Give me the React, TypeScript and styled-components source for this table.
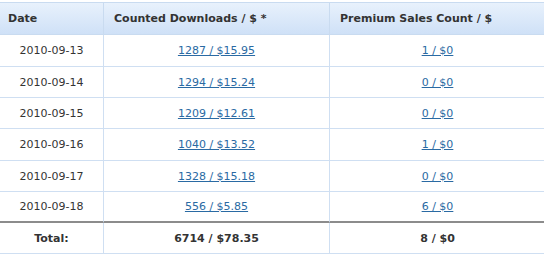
import * as React from 'react';
import styled, { createGlobalStyle } from 'styled-components';

const GlobalStyle = createGlobalStyle`
    html, body {
        margin: 0;
        padding: 0;
        background: #ffffff;
    }
    body {
        font-family: "DejaVu Sans", Verdana, sans-serif;
        font-size: 11px;
        color: #333333;
    }
`;

const Table = styled.table`
    margin-top: 2px;
    width: 545px;
    border-collapse: separate;
    border-spacing: 0;
    table-layout: fixed;
`;

const HeadCell = styled.th<{ $width?: number; $pad: number }>`
    width: ${(p) => (p.$width ? `${p.$width}px` : 'auto')};
    height: 33px;
    padding: 0 0 0 ${(p) => p.$pad}px;
    box-sizing: border-box;
    text-align: left;
    font-weight: bold;
    font-size: 11px;
    color: #333333;
    background: linear-gradient(to bottom, #e8f1fc 0%, #cfe1f7 100%);
    border-top: 1px solid #c9dbf0;
    border-bottom: 1px solid #c9dbf0;
    border-right: 1px solid #c9dbf0;
    &:last-child {
        border-right: none;
    }
`;

const Cell = styled.td<{ $height: number; $last?: boolean }>`
    height: ${(p) => p.$height}px;
    padding: 0;
    text-align: center;
    vertical-align: middle;
    border-bottom: ${(p) => (p.$last ? '2px solid #8c8c8c' : '1px solid #cfdff2')};
    border-right: 1px solid #cfdff2;
    &:last-child {
        border-right: none;
    }
`;

const TotalCell = styled.td`
    height: 30px;
    padding: 0;
    text-align: center;
    vertical-align: middle;
    font-weight: bold;
    border-bottom: 1px solid #cfdff2;
    border-right: 1px solid #cfdff2;
    &:last-child {
        border-right: none;
    }
`;

const StatLink = styled.a`
    color: #2a6aa3;
    text-decoration: underline;
    cursor: pointer;
`;

const rows = [
    { date: '2010-09-13', downloads: '1287 / $15.95', premium: '1 / $0', h: 31 },
    { date: '2010-09-14', downloads: '1294 / $15.24', premium: '0 / $0', h: 30 },
    { date: '2010-09-15', downloads: '1209 / $12.61', premium: '0 / $0', h: 30 },
    { date: '2010-09-16', downloads: '1040 / $13.52', premium: '1 / $0', h: 31 },
    { date: '2010-09-17', downloads: '1328 / $15.18', premium: '0 / $0', h: 30 },
    { date: '2010-09-18', downloads: '556 / $5.85', premium: '6 / $0', h: 29 },
];

function App() {
    return (
        <>
            <GlobalStyle />
            <Table>
                <thead>
                    <tr>
                        <HeadCell $width={104} $pad={8}>Date</HeadCell>
                        <HeadCell $width={226} $pad={10}>Counted Downloads / $ *</HeadCell>
                        <HeadCell $pad={10}>Premium Sales Count / $</HeadCell>
                    </tr>
                </thead>
                <tbody>
                    {rows.map((row, i) => {
                        const last = i === rows.length - 1;
                        return (
                            <tr key={row.date}>
                                <Cell $height={row.h} $last={last}>{row.date}</Cell>
                                <Cell $height={row.h} $last={last}>
                                    <StatLink>{row.downloads}</StatLink>
                                </Cell>
                                <Cell $height={row.h} $last={last}>
                                    <StatLink>{row.premium}</StatLink>
                                </Cell>
                            </tr>
                        );
                    })}
                    <tr>
                        <TotalCell>Total:</TotalCell>
                        <TotalCell>6714 / $78.35</TotalCell>
                        <TotalCell>8 / $0</TotalCell>
                    </tr>
                </tbody>
            </Table>
        </>
    );
}

export default App;
